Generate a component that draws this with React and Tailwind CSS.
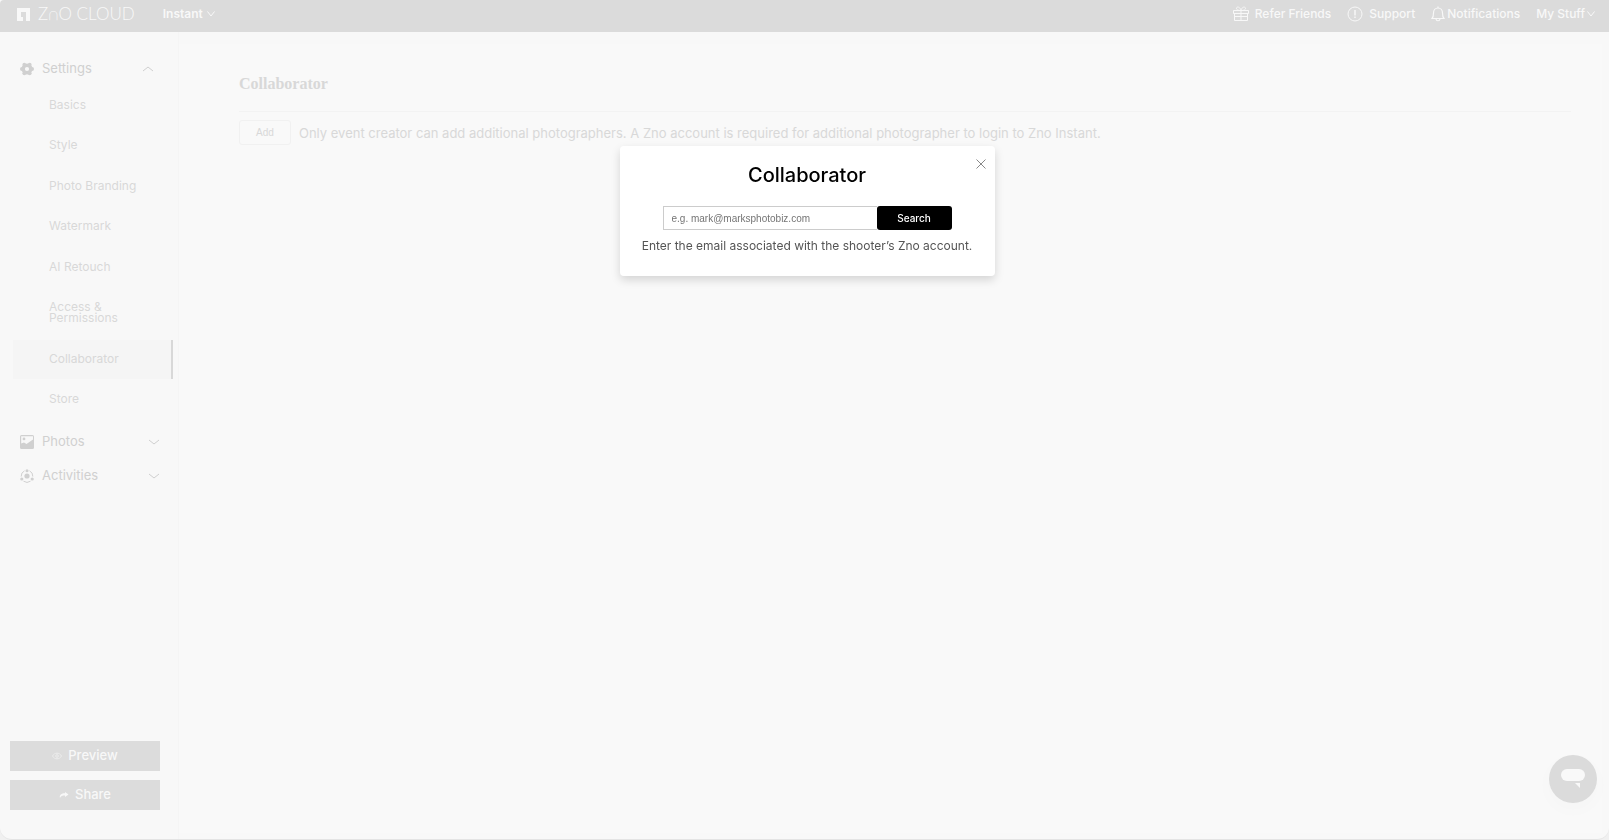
import React, { useState } from 'react'
import clsx from 'clsx'

const SETTINGS = ['Basics', 'Style', 'Photo Branding', 'Watermark', 'AI Retouch', 'Access & Permissions', 'Collaborator', 'Store']

function Chevron({ up, className }) {
  return (
    <svg viewBox="0 0 12 6" fill="none" stroke="currentColor" className={className}>
      <path d={up ? 'M1 5 L6 1 L11 5' : 'M1 1 L6 5 L11 1'} />
    </svg>
  )
}

function MenuChevron() {
  return (
    <svg viewBox="0 0 8 6" className="h-[6px] w-2" fill="none" stroke="currentColor">
      <path d="M.5 .5L4 5L7.500 .5" />
    </svg>
  )
}

function LogoMark() {
  return (
    <svg viewBox="0 0 13 13" className="h-[13px] w-[13px]" fill="currentColor">
      <path d="M0 0H13V13H9V4H4V9H6V13H0Z" />
    </svg>
  )
}

function GiftIcon() {
  return (
    <svg viewBox="0 0 16 16" className="h-4 w-4" fill="none" stroke="currentColor">
      <path d="M.5 4.500H15.500V7.500H.5ZM1.500 7.500V14.500H14.500V7.500M8 4.500V14.500M1.500 10.500H14.500M8 4.500C6 4.500 3 4 3.500 2C4 .5 7 .5 8 4.500C9 .5 12 .5 12.500 2C13 4 10 4.500 8 4.500" />
    </svg>
  )
}

function SupportIcon() {
  return (
    <svg viewBox="0 0 16 16" className="h-4 w-4" fill="none" stroke="currentColor">
      <circle cx="8" cy="8" r="7" />
      <path d="M8 4V9.500M8 10.500V12" strokeWidth="1.500" />
    </svg>
  )
}

function BellIcon() {
  return (
    <svg viewBox="0 0 14 16" className="h-4 w-[14px]" fill="none" stroke="currentColor" strokeWidth="1.200">
      <path d="M1 12.500C2.500 11 2.500 9.500 2.500 7C2.500 4 4.500 2 7 2C9.500 2 11.500 4 11.500 7C11.500 9.500 11.500 11 13 12.500ZM7 2V.5M5 13C5.300 15.300 8.700 15.300 9 13" />
    </svg>
  )
}

function GearIcon() {
  return (
    <svg viewBox="0 0 14 14" className="h-[14px] w-[14px]" fill="currentColor">
      <circle cx="7" cy="7" r="3.800" fill="none" stroke="currentColor" strokeWidth="3.400" />
      <circle cx="4.300" cy="2.700" r="1.900" />
      <circle cx="9.700" cy="2.700" r="1.900" />
      <circle cx="2" cy="7" r="2" />
      <circle cx="12" cy="7" r="2" />
      <circle cx="4.300" cy="11.300" r="1.900" />
      <circle cx="9.700" cy="11.300" r="1.900" />
    </svg>
  )
}

function PhotoIcon() {
  return (
    <svg viewBox="0 0 14 14" className="h-[14px] w-[14px]" fill="currentColor">
      <path fillRule="evenodd" d="M1.500 0H12.500Q14 0 14 1.500V12.500Q14 14 12.500 14H1.500Q0 14 0 12.500V1.500Q0 0 1.500 0ZM1.200 1.200V8.500L4 7.500L6.500 9L13 4.500V1.200ZM4 2.500A1.400 1.400 0 1 1 4 5.300A1.400 1.400 0 1 1 4 2.500Z" />
    </svg>
  )
}

function ActivityIcon() {
  return (
    <svg viewBox="0 0 14 14" className="h-[14px] w-[14px]" fill="currentColor">
      <circle cx="7" cy="7" r="2.600" />
      <circle cx="7" cy="1.700" r="1.500" />
      <circle cx="1.800" cy="10" r="1.600" />
      <circle cx="12.200" cy="10" r="1.600" />
      <path d="M4.500 1.800A6 6 0 0 0 1.200 7.500M9.500 1.800A6 6 0 0 1 12.800 7.500M3.500 12.200A6 6 0 0 0 10.500 12.200" fill="none" stroke="currentColor" />
    </svg>
  )
}

function EyeIcon() {
  return (
    <svg viewBox="0 0 10 8" className="h-2 w-[10px] opacity-60" fill="none" stroke="currentColor">
      <path d="M.5 4C2.500 .2 7.500 .2 9.500 4C7.500 7.800 2.500 7.800 .5 4Z" />
      <circle cx="5" cy="4" r="1.300" />
    </svg>
  )
}

function ShareIcon() {
  return (
    <svg viewBox="0 0 10 8" className="h-2 w-[10px]" fill="currentColor">
      <path d="M6 1L9.500 3.500L6 6V4.500C3 4.500 2 5 1 7C0 4 2.500 2.300 6 2.300Z" />
    </svg>
  )
}

function Header() {
  return (
    <header className="flex h-8 shrink-0 items-start justify-between rounded-tl bg-[#dbdbdb] pt-[6px] pr-[14px] pl-[17px] text-xs leading-4 font-medium text-[#f8f8f8]">
      <div className="flex">
        <a href="#" className="flex items-center gap-2">
          <LogoMark />
          <span className="font-[Lato] text-[17px] leading-4 font-light">Z∩O CLOUD</span>
        </a>
        <button className="ml-7 flex items-center gap-1 font-semibold">
          Instant <MenuChevron />
        </button>
      </div>
      <nav className="flex items-center gap-4">
        <a href="#" className="flex items-center gap-[6px]"><GiftIcon /> Refer Friends</a>
        <a href="#" className="flex items-center gap-[6px]"><SupportIcon /> Support</a>
        <a href="#" className="flex items-center gap-[2px]"><BellIcon /> Notifications</a>
        <button className="flex items-center gap-[2px]">My Stuff <MenuChevron /></button>
      </nav>
    </header>
  )
}

function SectionButton({ icon, label, up }) {
  return (
    <button className="flex h-[34px] w-full items-center pr-[18px] pl-5 text-[13px] text-[#d0d0d0]">
      {icon}
      <span className="ml-2 flex-1 text-left">{label}</span>
      <Chevron up={up} className={clsx('h-[6px] w-3', up && 'mr-[6px]')} />
    </button>
  )
}

function Sidebar({ active, onSelect }) {
  return (
    <aside className="flex w-[179px] shrink-0 flex-col border-r border-[#f5f5f5] pt-5">
      <SectionButton icon={<GearIcon />} label="Settings" up />
      <ul className="flex h-[333px] flex-col justify-between pr-[5px] pl-[13px] text-xs leading-[11px] text-[#d8d8d8]">
        {SETTINGS.map((name) => (
          <li key={name}>
            <button
              onClick={() => onSelect(name)}
              className={clsx(
                'w-full border-r-2 pt-[13px] pr-8 pb-[15px] pl-9 text-left',
                name === active ? 'border-[#d8d8d8] bg-[#f5f5f5]' : 'border-transparent'
              )}
            >
              {name}
            </button>
          </li>
        ))}
      </ul>
      <div className="mt-[6px]">
        <SectionButton icon={<PhotoIcon />} label="Photos" />
        <SectionButton icon={<ActivityIcon />} label="Activities" />
      </div>
      <div className="mt-auto flex flex-col gap-[9px] pr-[18px] pb-[29px] pl-[10px] text-[13px] font-medium text-[#f8f8f8]">
        <button className="flex h-[30px] items-center justify-center gap-[6px] bg-[#dcdcdc]"><EyeIcon /> Preview</button>
        <button className="flex h-[30px] items-center justify-center gap-[6px] bg-[#dcdcdc]"><ShareIcon /> Share</button>
      </div>
    </aside>
  )
}

function CollaboratorModal({ onClose }) {
  const [email, setEmail] = useState('')

  return (
    <div className="fixed inset-0 flex items-start justify-center pt-[146px] pl-[5px]">
      <div role="dialog" aria-labelledby="modal-title" className="relative w-[375px] rounded bg-white pt-[17px] pb-[22px] text-center shadow-[0_4px_10px_rgba(0,0,0,0.15)]">
        <button onClick={onClose} aria-label="Close" className="absolute top-3 right-2 text-[#888]">
          <svg viewBox="0 0 12 12" className="h-3 w-3" fill="none" stroke="currentColor">
            <path d="M1.500 1.500L10.500 10.500M10.500 1.500L1.500 10.500" />
          </svg>
        </button>
        <h2 id="modal-title" className="text-xl leading-6 font-medium text-black">Collaborator</h2>
        <form className="mx-[43px] mt-[19px] flex h-6" onSubmit={(e) => e.preventDefault()}>
          <input
            type="email"
            aria-label="Email"
            value={email}
            onChange={(e) => setEmail(e.target.value)}
            placeholder="e.g. mark@marksphotobiz.com"
            className="min-w-0 flex-1 border border-r-0 border-[#ccc] px-2 font-['Liberation_Sans',sans-serif] text-[10px] text-black placeholder:text-[#757575]"
          />
          <button className="w-[75px] rounded-[3px] bg-black text-[10px] font-medium text-white">Search</button>
        </form>
        <p className="mt-2 text-xs leading-4 text-[#555]">Enter the email associated with the shooter’s Zno account.</p>
      </div>
    </div>
  )
}

export default function App() {
  const [active, setActive] = useState('Collaborator')
  const [open, setOpen] = useState(true)

  return (
    <div className="h-screen bg-[#f0f0f0] font-[Inter,sans-serif]">
      <div className="flex h-full flex-col overflow-hidden rounded-b-xl border-b border-[#e4e4e4] bg-[#f8f8f8]">
        <Header />
        <div className="flex min-h-0 flex-1">
          <Sidebar active={active} onSelect={setActive} />
          <main className="mt-3 mr-[7px] mb-[6px] flex-1 bg-[#f9f9f9] pt-7 pr-[31px] pl-[60px] text-[#d8d8d8]">
            <h1 className="border-b border-[#f3f3f3] pb-[15px] font-['Liberation_Serif',serif] text-base leading-6 font-bold">Collaborator</h1>
            <div className="mt-2 flex items-center gap-2">
              <button onClick={() => setOpen(true)} className="h-[25px] w-[52px] rounded-[3px] border border-[#f1f1f1] font-['Liberation_Sans',sans-serif] text-[10px]">Add</button>
              <p className="text-[13px] leading-5">
                Only event creator can add additional photographers. A Zno account is required for additional photographer to login to Zno Instant.
              </p>
            </div>
          </main>
        </div>
      </div>

      <button aria-label="Open chat" className="fixed right-3 bottom-[37px] flex h-12 w-12 items-center justify-center rounded-full bg-[#dbdbdb] text-[#f9f9f9] shadow-[0_6px_20px_rgba(0,0,0,0.02)]">
        <svg viewBox="0 0 24 20" className="h-5 w-6" fill="currentColor">
          <rect y="0" width="24" height="12" rx="6" />
          <path d="M14 14H19V19Z" />
        </svg>
      </button>

      {open && <CollaboratorModal onClose={() => setOpen(false)} />}
    </div>
  )
}
